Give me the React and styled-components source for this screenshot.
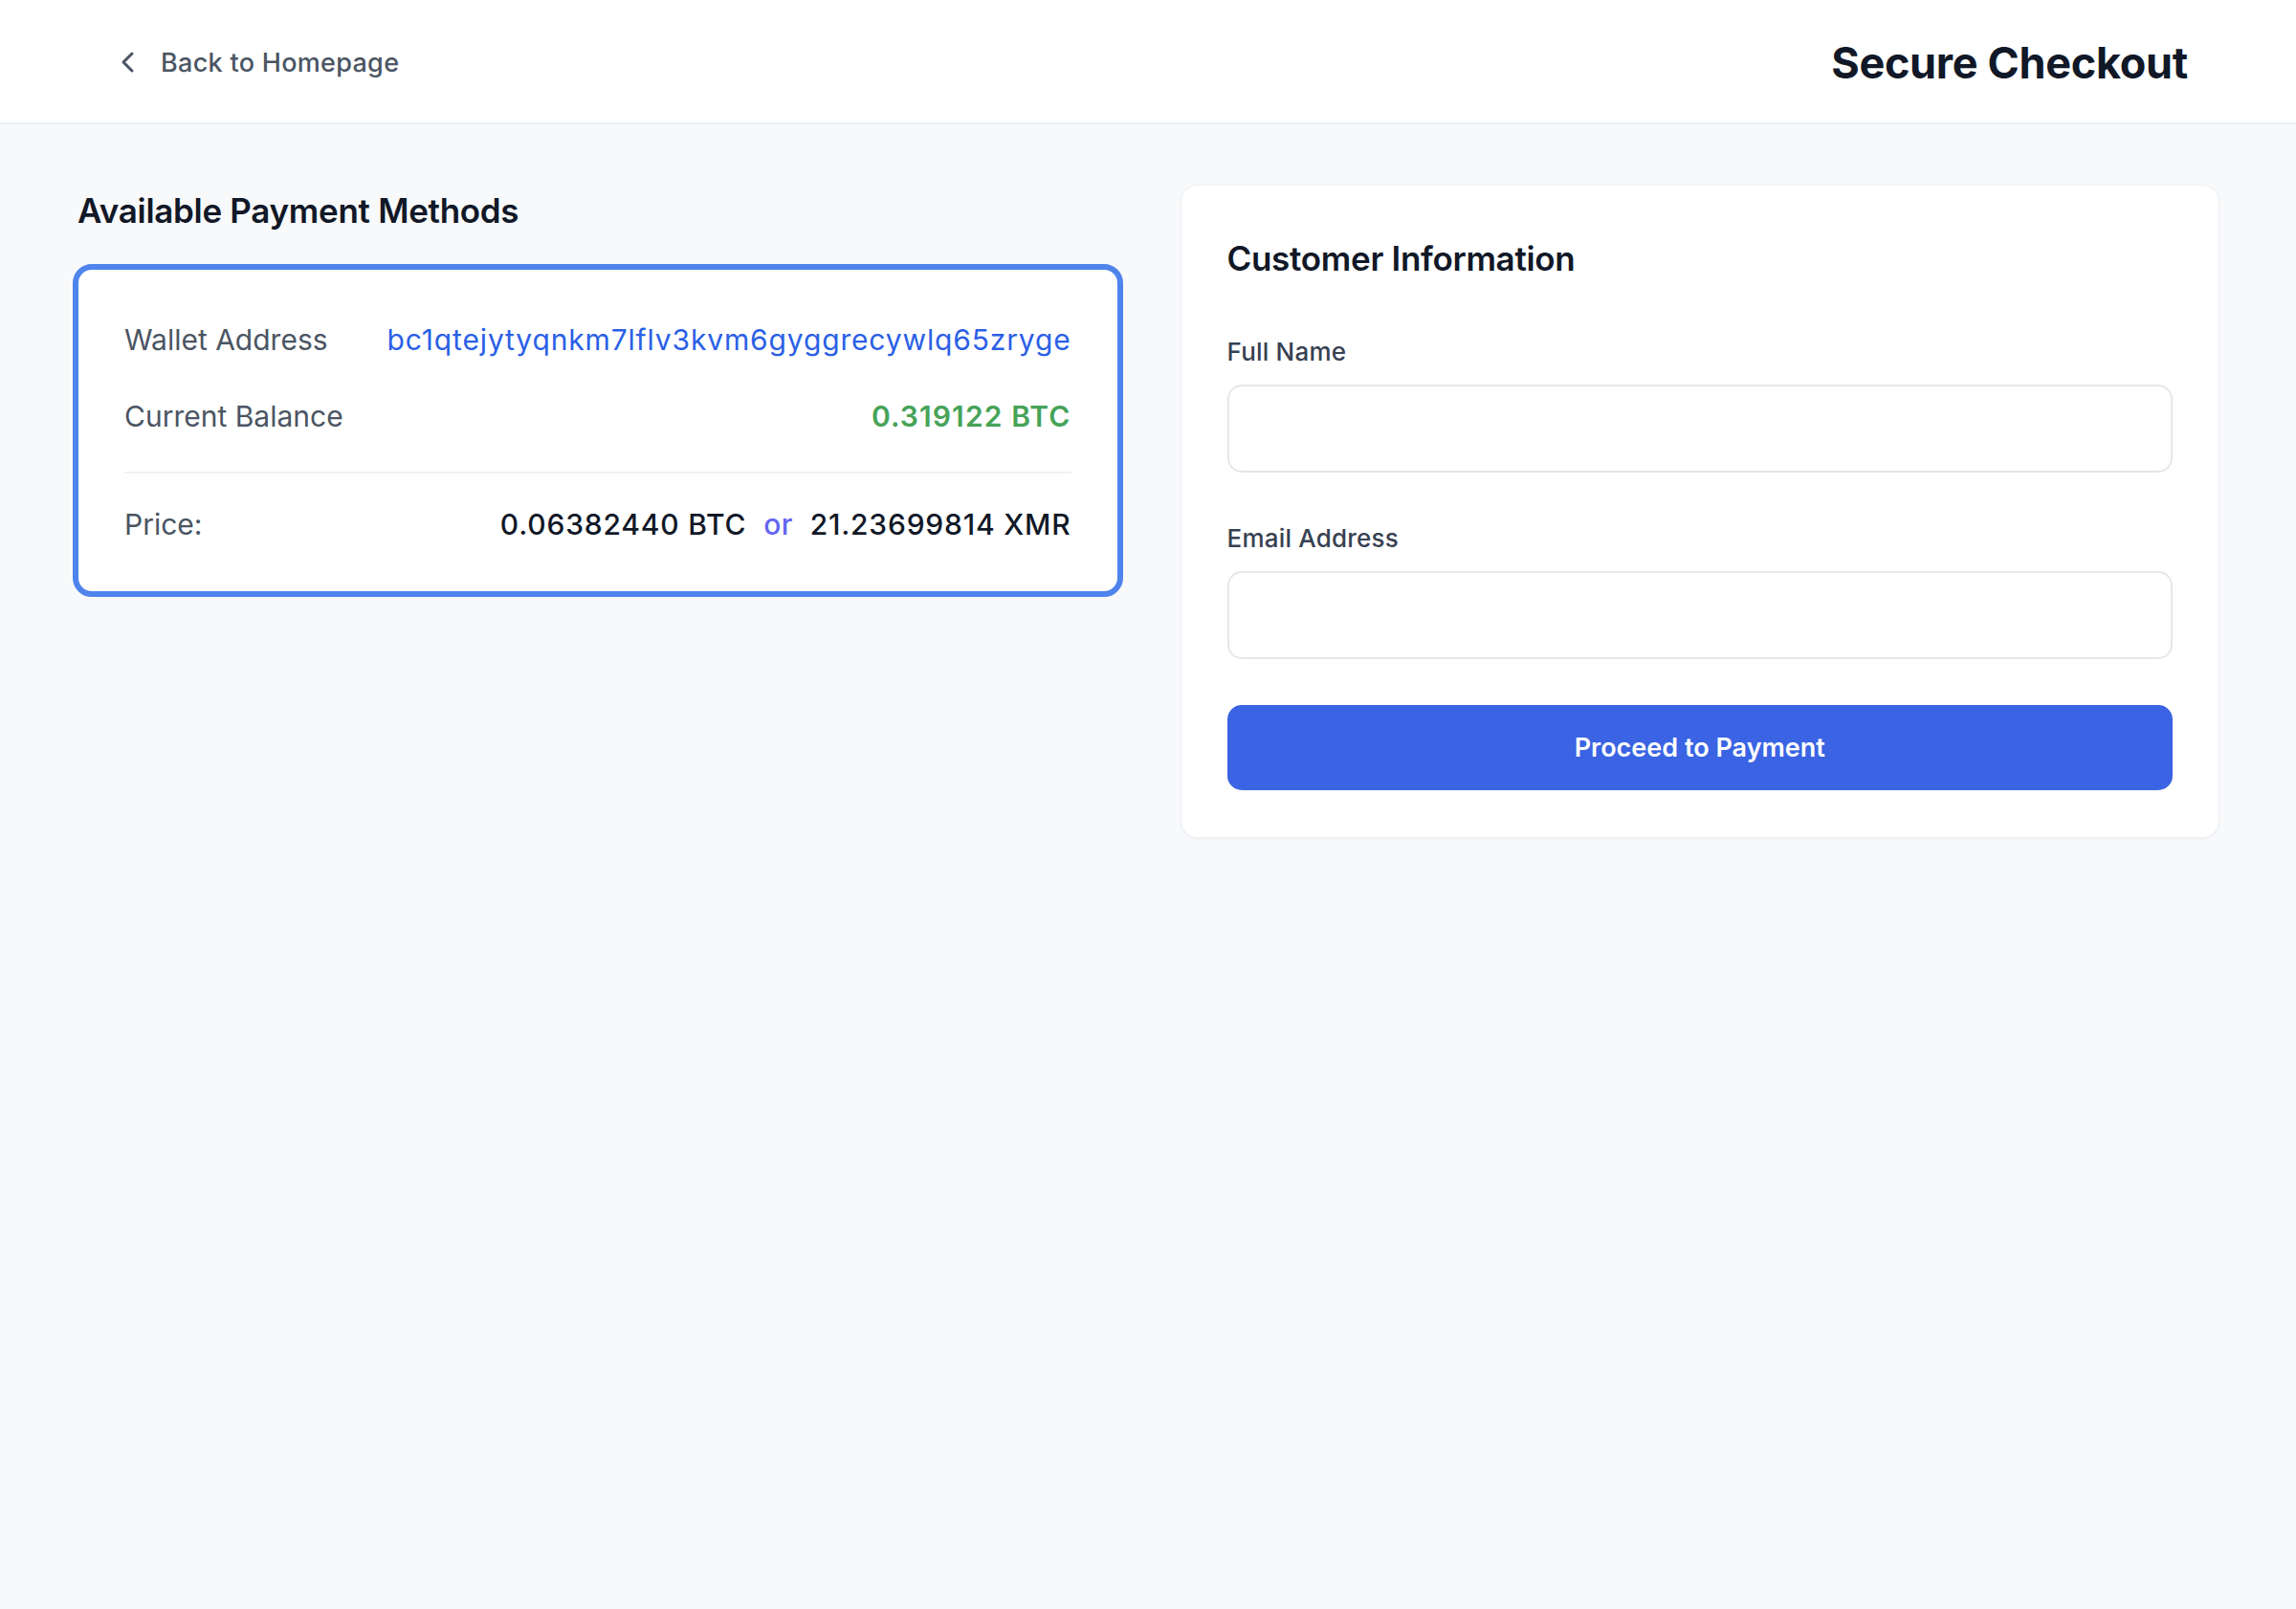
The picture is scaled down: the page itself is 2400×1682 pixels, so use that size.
import React from "react";
import styled, { createGlobalStyle } from "styled-components";

const GlobalStyle = createGlobalStyle`
  * {
    box-sizing: border-box;
  }
  html, body {
    margin: 0;
    padding: 0;
    background: #f8f9fb;
    font-family: Inter, "Noto Sans", "Liberation Sans", sans-serif;
    color: #111827;
  }
`;

const Page = styled.div`
  min-height: 100vh;
  background: #f8f9fb;
`;

const Header = styled.header`
  height: 130px;
  background: #ffffff;
  border-bottom: 2px solid #eef0f3;
  display: flex;
  align-items: center;
  justify-content: space-between;
  padding: 2px 113px 0 124px;
`;

const BackLink = styled.a`
  display: flex;
  align-items: center;
  gap: 24px;
  font-size: 27px;
  font-weight: 500;
  letter-spacing: 0.3px;
  color: #4b5563;
  text-decoration: none;
  cursor: pointer;
`;

const PageTitle = styled.h1`
  margin: 0;
  font-size: 45px;
  font-weight: 700;
  letter-spacing: -0.3px;
  color: #111827;
`;

const Main = styled.main`
  display: grid;
  grid-template-columns: 1fr 1fr;
  gap: 66px;
  padding: 63px 80px 0 81px;
  align-items: start;
`;

const SectionTitle = styled.h2`
  margin: 0 0 ${(p) => p.$mb || 0}px;
  font-size: 35px;
  line-height: 54px;
  font-weight: 600;
  letter-spacing: -0.3px;
  color: #111827;
`;

const MethodCard = styled.div`
  margin: 0 -6px 0 -5px;
  background: #ffffff;
  border: 6px solid #4f84ec;
  border-radius: 20px;
  padding: 51px 48px 47px;
`;

const InfoRow = styled.div`
  display: flex;
  justify-content: space-between;
  align-items: baseline;
  font-size: 30px;
  line-height: 45px;
  & + & {
    margin-top: 35px;
  }
`;

const PriceRow = styled(InfoRow)`
  margin-top: 29px;
  padding-top: 31px;
  border-top: 2px solid #f1f2f4;
`;

const Label = styled.span`
  color: #4b5563;
`;

const Value = styled.span`
  color: ${(p) => p.$color || "#111827"};
  font-weight: ${(p) => p.$weight || 400};
  letter-spacing: ${(p) => p.$spacing || 0.3}px;
`;

const PriceGroup = styled.div`
  display: flex;
  align-items: baseline;
  gap: 18px;
`;

const FormCard = styled.div`
  background: #ffffff;
  border: 1.5px solid #eff1f4;
  border-radius: 18px;
  box-shadow: 0 1px 3px rgba(17, 24, 39, 0.05);
  padding: 49px 48px 49px;
`;

const Field = styled.div`
  display: flex;
  flex-direction: column;
  gap: 16px;
  & + & {
    margin-top: 51px;
  }
`;

const FieldLabel = styled.label`
  font-size: 26px;
  line-height: 36px;
  font-weight: 500;
  letter-spacing: 0.2px;
  color: #374151;
`;

const Input = styled.input`
  height: 92px;
  width: 100%;
  border: 2px solid #e5e7eb;
  border-radius: 15px;
  padding: 0 24px;
  font-size: 24px;
  font-family: inherit;
  outline: none;
  background: #ffffff;
`;

const SubmitButton = styled.button`
  margin-top: 48px;
  width: 100%;
  height: 89px;
  border: none;
  border-radius: 15px;
  background: #3a64e3;
  color: #ffffff;
  font-family: inherit;
  font-size: 27px;
  font-weight: 600;
  cursor: pointer;
  box-shadow: 0 1px 2px rgba(0, 0, 0, 0.05);
`;

const ChevronLeft = () => (
  <svg width="20" height="28" viewBox="0 0 20 28" fill="none">
    <path
      d="M14 5 L5 14 L14 23"
      stroke="#4b5563"
      strokeWidth="3"
      strokeLinecap="round"
      strokeLinejoin="round"
    />
  </svg>
);

const App = () => {
  return (
    <Page>
      <GlobalStyle />
      <Header>
        <BackLink>
          <ChevronLeft />
          Back to Homepage
        </BackLink>
        <PageTitle>Secure Checkout</PageTitle>
      </Header>
      <Main>
        <section>
          <SectionTitle $mb={29}>Available Payment Methods</SectionTitle>
          <MethodCard>
            <InfoRow>
              <Label>Wallet Address</Label>
              <Value $color="#2b5fe6" $spacing={0.85}>
                bc1qtejytyqnkm7lflv3kvm6gyggrecywlq65zryge
              </Value>
            </InfoRow>
            <InfoRow>
              <Label>Current Balance</Label>
              <Value $color="#46a358" $weight={600} $spacing={1.1}>
                0.319122 BTC
              </Value>
            </InfoRow>
            <PriceRow>
              <Label>Price:</Label>
              <PriceGroup>
                <Value $weight={500} $spacing={0.8}>0.06382440 BTC</Value>
                <Value $color="#6366f1" $weight={500}>
                  or
                </Value>
                <Value $weight={500} $spacing={0.8}>21.23699814 XMR</Value>
              </PriceGroup>
            </PriceRow>
          </MethodCard>
        </section>
        <FormCard>
          <SectionTitle $mb={53}>Customer Information</SectionTitle>
          <Field>
            <FieldLabel>Full Name</FieldLabel>
            <Input type="text" />
          </Field>
          <Field>
            <FieldLabel>Email Address</FieldLabel>
            <Input type="email" />
          </Field>
          <SubmitButton>Proceed to Payment</SubmitButton>
        </FormCard>
      </Main>
    </Page>
  );
};

export default App;
